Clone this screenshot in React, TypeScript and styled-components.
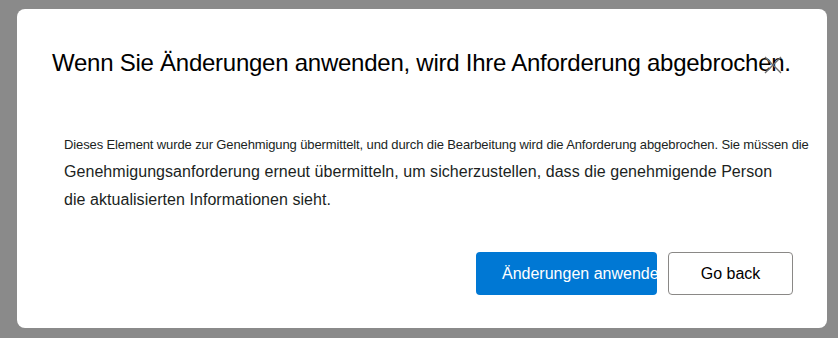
import React from "react";
import styled, { createGlobalStyle } from "styled-components";

const Global = createGlobalStyle`
  html, body {
    margin: 0;
    padding: 0;
    background: #8a8a8a;
    font-family: "Liberation Sans", Arial, sans-serif;
  }
`;

const Page = styled.div`
  width: 838px;
  height: 338px;
  padding: 9px 0 0 17px;
  box-sizing: border-box;
`;

const Card = styled.div`
  position: relative;
  width: 810px;
  height: 319px;
  background: #ffffff;
  border-radius: 8px;
  box-sizing: border-box;
  padding: 38px 34px 0 35px;
  display: flex;
  flex-direction: column;
`;

const Title = styled.h2`
  margin: 0;
  font-size: 24px;
  font-weight: 400;
  letter-spacing: -0.25px;
  line-height: 32px;
  color: #000000;
  white-space: nowrap;
`;

const CloseButton = styled.button`
  position: absolute;
  top: 46px;
  left: 746px;
  width: 20px;
  height: 20px;
  padding: 0;
  border: none;
  background: transparent;
  display: flex;
  align-items: center;
  justify-content: center;
  cursor: pointer;
`;

const Body = styled.div`
  margin: 56px 0 0 12px;
  color: #201f1e;
`;

const SmallLine = styled.p`
  margin: 0;
  font-size: 13px;
  letter-spacing: -0.12px;
  line-height: 20px;
  white-space: nowrap;
`;

const Text = styled.p`
  margin: 3px 0 0;
  font-size: 16px;
  letter-spacing: 0.05px;
  line-height: 28px;
`;

const Footer = styled.div`
  margin-top: auto;
  margin-bottom: 33px;
  display: flex;
  justify-content: flex-end;
  gap: 11px;
`;

const Button = styled.button<{ $primary?: boolean }>`
  height: 43px;
  box-sizing: border-box;
  border-radius: 4px;
  font-family: "Liberation Sans", Arial, sans-serif;
  font-size: 16px;
  white-space: nowrap;
  overflow: hidden;
  display: flex;
  align-items: center;
  cursor: pointer;
  ${(p) =>
    p.$primary
      ? `
    width: 181px;
    padding: 0 0 0 26px;
    justify-content: flex-start;
    background: #0078d4;
    border: none;
    color: #ffffff;
  `
      : `
    width: 125px;
    padding: 0;
    justify-content: center;
    background: #ffffff;
    border: 1px solid #8a8886;
    color: #000000;
  `}
`;

export default function App() {
  return (
    <>
      <Global />
      <Page>
        <Card>
          <Title>Wenn Sie Änderungen anwenden, wird Ihre Anforderung abgebrochen.</Title>
          <CloseButton aria-label="Schließen">
            <svg width="18" height="18" viewBox="0 0 18 18">
              <path d="M1 1 L17 17 M17 1 L1 17" stroke="#6e6e6e" strokeWidth="1.4" fill="none" />
            </svg>
          </CloseButton>
          <Body>
            <SmallLine>
              Dieses Element wurde zur Genehmigung übermittelt, und durch die Bearbeitung wird die Anforderung abgebrochen. Sie müssen die
            </SmallLine>
            <Text>
              Genehmigungsanforderung erneut übermitteln, um sicherzustellen, dass die genehmigende Person
              <br />
              die aktualisierten Informationen sieht.
            </Text>
          </Body>
          <Footer>
            <Button $primary>Änderungen anwenden</Button>
            <Button>Go back</Button>
          </Footer>
        </Card>
      </Page>
    </>
  );
}
